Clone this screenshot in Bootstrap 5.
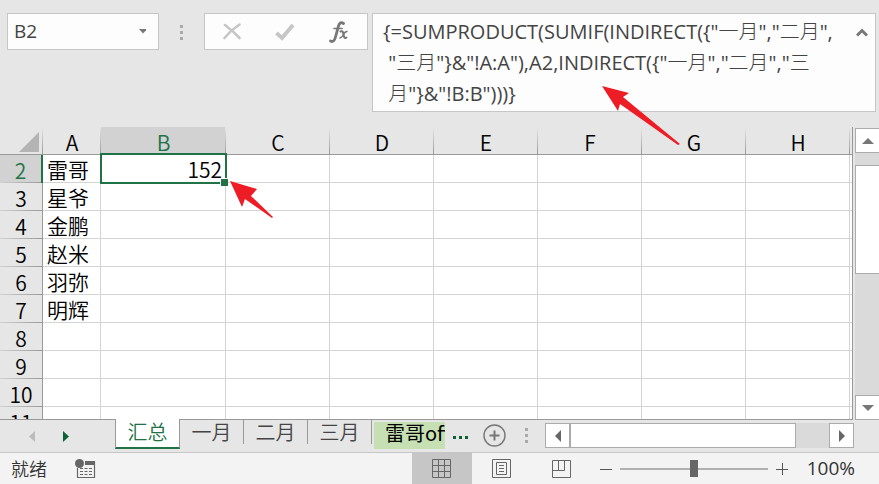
<!DOCTYPE html>
<html lang="zh-CN">
<head>
<meta charset="utf-8">
<meta name="viewport" content="width=device-width, initial-scale=1">
<title>汇总</title>
<link href="https://cdn.jsdelivr.net/npm/bootstrap@5.3.0/dist/css/bootstrap.min.css" rel="stylesheet">
<style>
:root{--chrome:#e6e6e6;--edge:#c6c6c6;--line:#d4d4d4;--dark:#999;--green:#217346;--ink:#444}
body{background:var(--chrome);color:#000;font-family:"Noto Sans CJK SC",sans-serif;font-weight:350;overflow:hidden}
button{border:0;background:none;padding:0;line-height:1;color:inherit;border-radius:0;font-weight:inherit}
svg{display:block;flex:none}
.formula-bar{height:127px;padding:13px 3px 15px 7px}
.fbox{background:#fdfdfd;border:1px solid var(--edge);height:37px}
.name-box{width:152px}
.name-box input,.formula textarea{border:0;background:transparent;color:var(--ink);font:20px/31px "Open Sans","Noto Sans CJK SC Light","Noto Sans CJK SC",sans-serif;font-kerning:none;outline:0;resize:none;overflow:hidden}
.name-box input{width:120px;padding:0 0 0 6px;font-size:19px}
.grip{width:45px}
.fx-box{width:164px;margin-right:4px;padding:0 18px}
.formula{height:99px}
.formula textarea{min-width:0;padding:2px 0 0 10px;white-space:pre}
.formula button{width:26px;height:37px}
.sheet-area{height:293px}
.grid-view{background:#fff;overflow:hidden;border-right:1px solid var(--dark);border-bottom:1px solid var(--dark)}
.cells{table-layout:fixed;width:100%;border-collapse:separate;border-spacing:0;font-size:21px;line-height:25px}
.cells th,.cells td{height:28px;padding:2px 0 0;font-weight:350;border-right:1px solid var(--line);border-bottom:1px solid var(--line);white-space:nowrap}
.cells th{text-align:center}
.cells thead th{padding-top:3px;line-height:24px;border-right:0;border-bottom-color:var(--dark);background:linear-gradient(var(--chrome),var(--dark)) right/1px 100% no-repeat var(--chrome)}
.cells thead th:last-child{background:var(--chrome)}
.cells tbody th{border-bottom:0;border-right-color:var(--dark);background:linear-gradient(90deg,#d0d0d0,var(--dark)) bottom/100% 1px no-repeat var(--chrome)}
.cells td{padding-left:4px}
.cells td:last-child{border-right:0}
.cells thead th.on,.cells tbody th.on{background-color:#d2d2d2;color:var(--green)}
.cells tbody th.on{border-right:2px solid var(--green)}
.cells td.picked{position:relative;text-align:right;padding-right:3px}
.picked::before{content:"";position:absolute;inset:-2px -2px -2px -1px;border:2px solid var(--green)}
.picked::after{content:"";position:absolute;right:-3px;bottom:-4px;width:8px;height:8px;background:var(--green);border:solid #fff;border-width:1px 0 0 1px}
.w-head{width:43px}.w-a{width:58px}.w-b{width:125px}.w-end{width:2px}
.v-scroll{width:24px;margin:1px 0 0 2px;background:#dadada}
.step{width:25px;height:25px;background:#fff;border:1px solid #ababab;display:flex;align-items:center;justify-content:center;flex:none}
.v-scroll .step{border-right:0;width:24px}
.v-thumb{height:109px;margin-top:12px;background:#fff;border:1px solid #ababab;border-right:0}
.tab-bar{height:33px;border-bottom:1px solid var(--edge);color:var(--ink)}
.sheet-nav{width:115px;padding:7px 0 0 28px}
.tabs{font-size:20px}
.tabs button{width:64px;height:24px;line-height:24px;border-right:1px solid var(--dark);white-space:nowrap}
.tabs .current{width:65px;height:30px;margin-top:-1px;padding-bottom:3px;background:#fff;color:var(--green);border-left:1px solid var(--dark);border-bottom:2px solid var(--green)}
.tabs .tinted{width:71px;height:27px;margin:2px 0 0 2px;padding:0 0 5px 11px;line-height:22px;overflow:hidden;background:#c6e0b4;border:0;color:#000;font-weight:400;text-align:left}
.more{color:#0a6332;width:30px;height:34px;padding-left:2px}
.tab-grip{margin:8px 0 0 19px}
.h-scroll{height:25px;background:#dadada;margin:3px 0 0 17px}
.h-thumb{width:226px;background:#fff;border:1px solid #ababab}
.corner{width:25px}
.status{height:31px;background:#f3f3f3;color:#333;font-size:18px}
.ready{padding-left:11px}
.view-btn{width:60px;height:31px;display:flex;align-items:center;justify-content:center}
.view-btn.on{background:#c6c6c6}
.zoom-range{appearance:none;width:148px;height:18px;background:linear-gradient(#b0b0b0,#b0b0b0) center/100% 2px no-repeat}
.zoom-range::-webkit-slider-thumb{appearance:none;width:8px;height:17px;background:#666}
.pct{font-family:"Open Sans",sans-serif;font-size:19px;font-weight:400;margin:0 24px 0 19px}
.pointer{position:absolute;pointer-events:none}
.p-formula{left:602px;top:85px}
.p-cell{left:230px;top:180px}
</style>
</head>
<body class="position-relative">
<header class="formula-bar d-flex align-items-start">
  <div class="fbox name-box d-flex align-items-center">
    <input type="text" value="B2" aria-label="名称框">
    <button type="button" class="ms-auto me-2 p-1" aria-label="名称列表"><svg width="8" height="5"><path d="M1 0h8L5 4.500z" fill="#777"/></svg></button>
  </div>
  <div class="grip d-flex justify-content-center pt-2"><svg width="3" height="19" class="mt-1" fill="#aaa"><path d="M0 0h3v3H0zM0 6h3v3H0zM0 12h3v3H0z"/></svg></div>
  <div class="fbox fx-box d-flex align-items-center justify-content-between">
    <button type="button" aria-label="取消"><svg width="18" height="17"><path d="M2 2Q9 7 16.500 15" fill="none" stroke="#c6c6c6" stroke-width="2.600" stroke-linecap="round"/><path d="M16.500 1.500Q8 7 1.500 15" fill="none" stroke="#c6c6c6" stroke-width="2.600" stroke-linecap="round"/></svg></button>
    <button type="button" aria-label="输入"><svg width="20" height="18"><path d="M1.500 10l5.500 5L18 2" fill="none" stroke="#c6c6c6" stroke-width="4"/></svg></button>
    <button type="button" aria-label="插入函数"><svg width="20" height="22" fill="none" stroke="#777" stroke-linecap="round"><path d="M14.500 2.500Q11 0 9.500 5L6.500 16Q5 22 1.500 20" stroke-width="2.800"/><path d="M5 7.500h8" stroke-width="1.600"/><path d="M11.500 10.500q2-1 2.500 1l1 4q.5 2.500 2.500 1" stroke-width="2"/><path d="M18 10.500q-2 0-3.500 3T11 17" stroke-width="1.500"/></svg></button>
  </div>
  <div class="fbox formula d-flex flex-fill">
    <textarea class="flex-fill" rows="3" aria-label="编辑栏" spellcheck="false">{=SUMPRODUCT(SUMIF(INDIRECT({"一月","二月",
 "三月"}&amp;"!A:A"),A2,INDIRECT({"一月","二月","三
 月"}&amp;"!B:B")))}</textarea>
    <button type="button" aria-label="折叠编辑栏"><svg class="mx-auto" width="12" height="9"><path d="M1 7.500L6 2.500l5 5" fill="none" stroke="#777" stroke-width="3"/></svg></button>
  </div>
</header>
<main class="sheet-area d-flex">
  <div class="grid-view flex-fill">
    <table class="cells">
      <colgroup><col class="w-head"><col class="w-a"><col class="w-b"><col><col><col><col><col><col><col class="w-end"></colgroup>
      <thead><tr><th><button type="button" class="d-block ms-auto me-1" aria-label="全选"><svg width="20" height="20"><path d="M20 0v20H0z" fill="#b4b4b4"/></svg></button></th><th>A</th><th class="on">B</th><th>C</th><th>D</th><th>E</th><th>F</th><th>G</th><th>H</th><th></th></tr></thead>
      <tbody>
        <tr><th class="on">2</th><td>雷哥</td><td class="picked">152</td><td></td><td></td><td></td><td></td><td></td><td></td><td></td></tr>
        <tr><th>3</th><td>星爷</td><td></td><td></td><td></td><td></td><td></td><td></td><td></td><td></td></tr>
        <tr><th>4</th><td>金鹏</td><td></td><td></td><td></td><td></td><td></td><td></td><td></td><td></td></tr>
        <tr><th>5</th><td>赵米</td><td></td><td></td><td></td><td></td><td></td><td></td><td></td><td></td></tr>
        <tr><th>6</th><td>羽弥</td><td></td><td></td><td></td><td></td><td></td><td></td><td></td><td></td></tr>
        <tr><th>7</th><td>明辉</td><td></td><td></td><td></td><td></td><td></td><td></td><td></td><td></td></tr>
        <tr><th>8</th><td></td><td></td><td></td><td></td><td></td><td></td><td></td><td></td><td></td></tr>
        <tr><th>9</th><td></td><td></td><td></td><td></td><td></td><td></td><td></td><td></td><td></td></tr>
        <tr><th>10</th><td></td><td></td><td></td><td></td><td></td><td></td><td></td><td></td><td></td></tr>
        <tr><th>11</th><td></td><td></td><td></td><td></td><td></td><td></td><td></td><td></td><td></td></tr>
      </tbody>
    </table>
  </div>
  <div class="v-scroll d-flex flex-column">
    <button type="button" class="step" aria-label="向上滚动"><svg width="12" height="6"><path d="M0 6h12L6 0z" fill="#777"/></svg></button>
    <div class="v-thumb"></div>
    <button type="button" class="step mt-auto" aria-label="向下滚动"><svg width="12" height="6"><path d="M0 0h12L6 6z" fill="#777"/></svg></button>
  </div>
</main>
<nav class="tab-bar d-flex align-items-start" aria-label="工作表">
  <div class="sheet-nav d-flex align-items-center">
    <button type="button" class="py-1" aria-label="上一张"><svg width="7" height="11"><path d="M7 0v11L1 5.500z" fill="#bbb"/></svg></button>
    <button type="button" class="py-1 ms-4 ps-1" aria-label="下一张"><svg width="7" height="11"><path d="M0 0v11l6-5.500z" fill="#0a6332"/></svg></button>
  </div>
  <div class="tabs d-flex">
    <button type="button" class="current">汇总</button><button type="button">一月</button><button type="button">二月</button><button type="button">三月</button><button type="button" class="tinted">雷哥office</button>
  </div>
  <button type="button" class="more" aria-label="更多工作表"><svg class="mx-auto" width="16" height="3" fill="currentColor"><path d="M0 0h3v3H0zM6 0h3v3H6zM12 0h3v3h-3z"/></svg></button>
  <button type="button" class="mt-1 ms-2" aria-label="新工作表"><svg width="23" height="23" fill="none" stroke="#777"><circle cx="11.500" cy="11.500" r="10.500" stroke-width="1.400"/><path d="M6.500 11.500h10M11.500 6.500v10" stroke-width="2"/></svg></button>
  <svg class="tab-grip" width="3" height="16" fill="#aaa"><path d="M0 0h3v3H0zM0 6h3v3H0zM0 12h3v3H0z"/></svg>
  <div class="h-scroll d-flex flex-fill">
    <button type="button" class="step" aria-label="向左滚动"><svg width="6" height="12"><path d="M6 0v12L0 6z" fill="#666"/></svg></button>
    <div class="h-thumb"></div>
    <button type="button" class="step ms-auto" aria-label="向右滚动"><svg width="6" height="12"><path d="M0 0v12l6-6z" fill="#666"/></svg></button>
  </div>
  <div class="corner"></div>
</nav>
<footer class="status d-flex align-items-center">
  <span class="ready">就绪</span>
  <button type="button" class="ms-4 ps-1" aria-label="录制宏"><svg width="22" height="20" fill="none" stroke="#666"><path d="M2.500 9v9.500h17V3H11" stroke-width="1.200"/><path d="M10 2h10v4H10z" fill="#666" stroke="none"/><circle cx="4.500" cy="4.500" r="4.500" fill="#666" stroke="none"/><path d="M5 9.500h12M5 12.500h12M5 15.500h12" stroke-dasharray="3 1.500"/></svg></button>
  <div class="d-flex align-items-center ms-auto">
    <button type="button" class="view-btn on" aria-label="普通"><svg width="19" height="19" fill="none" stroke="#666"><path d="M.5.5h18v18H.5zM.5 6.500h18M.5 12.500h18M6.500.5v18M12.500.5v18"/></svg></button>
    <button type="button" class="view-btn" aria-label="页面布局"><svg width="19" height="19" fill="none" stroke="#666"><path d="M.5.5h18v18H.5zM4.500 3.500h10v12h-10zM7 6.500h5M7 9.500h5M7 12.500h5"/></svg></button>
    <button type="button" class="view-btn" aria-label="分页预览"><svg width="19" height="18" fill="none" stroke="#666"><path d="M.5.5h18v17H.5zM.5 10.500h12V.5M6.500.5v10"/></svg></button>
    <button type="button" class="ms-2" aria-label="缩小"><svg width="12" height="12" stroke="#555"><path d="M0 6.500h12"/></svg></button>
    <input type="range" class="zoom-range mx-2" min="0" max="100" value="50" aria-label="显示比例">
    <button type="button" aria-label="放大"><svg width="12" height="12" stroke="#555"><path d="M0 6.500h12M6.500 0v12"/></svg></button>
    <button type="button" class="pct">100%</button>
  </div>
</footer>
<svg class="pointer p-formula" width="80" height="62"><path d="M0 1l27 7-6 4 57 47-2 1-58-41-2 7z" fill="#ee1c24"/></svg>
<svg class="pointer p-cell" width="44" height="40"><path d="M0 1l27 8-6 7 22 21-1 1-27-19-3 8z" fill="#ee1c24"/></svg>
<script src="https://cdn.jsdelivr.net/npm/bootstrap@5.3.0/dist/js/bootstrap.bundle.min.js"></script>
</body>
</html>
